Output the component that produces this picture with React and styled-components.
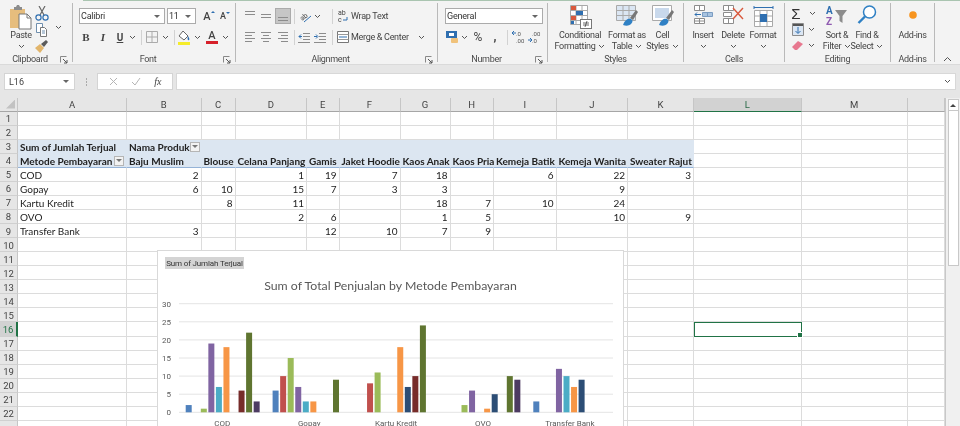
import React from 'react';
import styled, { createGlobalStyle } from 'styled-components';

const GlobalStyle = createGlobalStyle`
  html, body { margin: 0; padding: 0; background: #e6e6e6; overflow: hidden; }
  * { box-sizing: border-box; }
`;

const COLUMNS = [
  ['A', 109], ['B', 74.5], ['C', 34], ['D', 71.5], ['E', 32.5], ['F', 61], ['G', 50],
  ['H', 43.5], ['I', 62.5], ['J', 71.5], ['K', 66], ['L', 107.5], ['M', 106.5], ['', 37],
];
const PRODUCTS = ['Baju Muslim', 'Blouse', 'Celana Panjang', 'Gamis', 'Jaket Hoodie', 'Kaos Anak', 'Kaos Pria', 'Kemeja Batik', 'Kemeja Wanita', 'Sweater Rajut'];
const SALES = [
  ['COD', [2, null, 1, 19, 7, 18, null, 6, 22, 3]],
  ['Gopay', [6, 10, 15, 7, 3, 3, null, null, 9, null]],
  ['Kartu Kredit', [null, 8, 11, null, null, 18, 7, 10, 24, null]],
  ['OVO', [null, null, 2, 6, null, 1, 5, null, 10, 9]],
  ['Transfer Bank', [3, null, null, 12, 10, 7, 9, null, null, null]],
];
const SERIES = ['#4f81bd', '#c0504d', '#9bbb59', '#8064a2', '#4bacc6', '#f79646', '#2c4d75', '#772c2a', '#5f7530', '#4d3b62'];

const Window = styled.div`
  width: 960px;
  height: 426px;
  overflow: hidden;
  display: flex;
  flex-direction: column;
  background: #e6e6e6;
  font-family: Roboto, "Liberation Sans", sans-serif;
  filter: blur(0.35px);
`;

/* ribbon */
const Ribbon = styled.div`
  height: 65px;
  flex: none;
  display: flex;
  align-items: flex-start;
  padding-top: 3px;
  background: #f3f3f3;
  border-bottom: 1px solid #dadada;
  position: relative;
  &::before {
    content: "";
    position: absolute;
    top: 0;
    left: 83px;
    right: 0;
    height: 1px;
    background: #a9c4b0;
  }
`;
const Group = styled.section`
  width: ${(p) => p.$w}px;
  height: 59px;
  flex: none;
  position: relative;
  border-right: 1.5px solid #b9b9b9;
`;
const GroupBody = styled.div`
  height: 50px;
  display: flex;
  padding-left: ${(p) => p.$pad || 0}px;
  padding-top: ${(p) => p.$top ?? 2}px;
`;
const GroupLabel = styled.div`
  height: 9px;
  padding-right: ${(p) => (p.$launcher ? 12 : 0)}px;
  line-height: 12px;
  font-size: 9px;
  letter-spacing: -0.3px;
  color: #4a4a4a;
  text-align: center;
  white-space: nowrap;
`;
const Launcher = styled.svg`
  position: absolute;
  right: 3px;
  bottom: -3px;
`;
const Stack = styled.div`
  display: flex;
  flex-direction: column;
  gap: 5px;
`;
const ToolRow = styled.div`
  display: flex;
  align-items: center;
  height: 16px;
`;
const Tool = styled.div`
  width: ${(p) => p.$w || 14}px;
  height: 16px;
  margin-left: ${(p) => p.$ml || 0}px;
  flex: none;
  display: flex;
  align-items: center;
  justify-content: center;
  font-size: ${(p) => p.$size || 10}px;
  color: #444;
  background: ${(p) => (p.$active ? '#c6c6c6' : 'transparent')};
  border: ${(p) => (p.$active ? '1px solid #ababab' : 'none')};
`;
const ToolSep = styled.div`
  width: 1px;
  height: 15px;
  margin-left: ${(p) => p.$ml || 0}px;
  flex: none;
  background: #d2d2d2;
`;
const ToolText = styled.span`
  margin-left: 2px;
  font-size: 9px;
  letter-spacing: -0.3px;
  color: #444;
  white-space: nowrap;
`;
const SelectBox = styled.div`
  width: ${(p) => p.$w}px;
  height: 16px;
  margin-left: ${(p) => p.$ml || 0}px;
  flex: none;
  display: flex;
  align-items: center;
  justify-content: space-between;
  padding: 0 4px 0 1px;
  background: #fff;
  border: 1px solid #ababab;
  font-size: 9px;
  letter-spacing: -0.2px;
  color: #333;
`;
const Caret = styled.i`
  width: 0;
  height: 0;
  border-left: 3px solid transparent;
  border-right: 3px solid transparent;
  border-top: 3px solid ${(p) => p.$color || '#666'};
`;
const BigButton = styled.div`
  width: ${(p) => p.$w}px;
  flex: none;
  display: flex;
  flex-direction: column;
  align-items: center;
  font-size: 9px;
  letter-spacing: -0.3px;
  line-height: 11px;
  color: #444;
  white-space: nowrap;
`;
const BigIcon = styled.div`
  height: 25px;
  padding-top: ${(p) => p.$top || 0}px;
  display: flex;
  align-items: flex-start;
  justify-content: center;
`;
const LabelLine = styled.div`
  height: 11px;
  display: flex;
  align-items: center;
  justify-content: center;
  gap: 3px;
`;
const SmallColumn = styled.div`
  width: ${(p) => p.$w}px;
  flex: none;
  display: flex;
  flex-direction: column;
  align-items: center;
  padding-top: ${(p) => p.$top || 0}px;
  gap: ${(p) => p.$gap || 1}px;
`;
const SmallItem = styled.div`
  display: flex;
  align-items: center;
  gap: ${(p) => p.$gap || 3}px;
  height: ${(p) => p.$h || 15}px;
`;
const BoldMark = styled.b`
  font-family: "Liberation Serif", serif;
  font-size: 11px;
`;
const ItalicMark = styled.i`
  font-family: "Liberation Serif", serif;
  font-size: 11px;
  font-weight: 700;
`;
const UnderMark = styled.span`
  font-weight: 700;
  font-size: 10px;
  text-decoration: underline;
`;
const ColorMark = styled.span`
  display: block;
  width: 12px;
  height: 14px;
  line-height: 11px;
  text-align: center;
  font-size: 11px;
  font-weight: 500;
  color: #444;
  border-bottom: 3px solid #d6202a;
`;
const GrowMark = styled.span`
  font-size: ${(p) => p.$size}px;
  font-weight: 500;
  color: #444;
  position: relative;
  &::after {
    content: "";
    position: absolute;
    top: 1px;
    right: -4px;
    border-left: 2px solid transparent;
    border-right: 2px solid transparent;
    ${(p) => (p.$down ? 'border-top' : 'border-bottom')}: 2px solid #2f6fb0;
  }
`;
const SigmaMark = styled.span`
  font-family: "Liberation Sans", sans-serif;
  font-size: 15px;
  line-height: 15px;
  color: #333;
`;
const CollapseSlot = styled.div`
  flex: 1;
  height: 59px;
  display: flex;
  align-items: flex-end;
  justify-content: center;
`;

/* formula bar */
const FormulaBar = styled.div`
  height: 33px;
  flex: none;
  display: flex;
  padding: 8px 4px;
  background: #e6e6e6;
`;
const NameBox = styled.div`
  width: 71px;
  display: flex;
  align-items: center;
  justify-content: space-between;
  padding: 0 5px 0 4px;
  background: #fff;
  border: 1px solid #d4d4d4;
  font-size: 9px;
  color: #444;
`;
const GripDots = styled.div`
  width: 22px;
  display: flex;
  flex-direction: column;
  align-items: center;
  justify-content: center;
  gap: 1px;
  i {
    width: 1px;
    height: 2px;
    background: #aaa;
  }
`;
const FormulaTools = styled.div`
  width: 76px;
  display: flex;
  align-items: center;
  justify-content: space-around;
  padding: 0 4px;
  background: #fff;
  border: 1px solid #d4d4d4;
`;
const FxMark = styled.span`
  font-family: "Liberation Serif", serif;
  font-style: italic;
  font-size: 10px;
  color: #444;
`;
const FormulaInput = styled.div`
  flex: 1;
  margin-left: 3px;
  display: flex;
  align-items: center;
  justify-content: flex-end;
  padding-right: 4px;
  background: #fff;
  border: 1px solid #d8d8d8;
`;

/* sheet */
const SheetArea = styled.div`
  flex: 1;
  display: flex;
  position: relative;
  overflow: hidden;
  background: #fff;
`;
const SheetGrid = styled.div`
  width: 945px;
  flex: none;
  display: grid;
  grid-template-columns: 18px ${(p) => p.$columns};
  grid-template-rows: 13.5px repeat(23, 14.07px);
`;
const Corner = styled.div`
  background: #e6e6e6;
  border-right: 1px solid #c6c6c6;
  border-bottom: 1px solid #a6a6a6;
  position: relative;
  &::after {
    content: "";
    position: absolute;
    right: 2px;
    bottom: 2px;
    width: 9px;
    height: 9px;
    background: #c2c2c2;
    clip-path: polygon(100% 0, 100% 100%, 0 100%);
  }
`;
const ColHead = styled.div`
  display: flex;
  align-items: center;
  justify-content: center;
  font-size: 9.5px;
  color: ${(p) => (p.$selected ? '#2b6a48' : '#444')};
  background: ${(p) => (p.$selected ? '#d2d2d2' : '#e6e6e6')};
  border-right: 1px solid #c6c6c6;
  border-bottom: ${(p) => (p.$selected ? '1.5px solid #217346' : '1px solid #a6a6a6')};
`;
const RowHead = styled.div`
  display: flex;
  align-items: center;
  justify-content: center;
  padding-top: 1px;
  font-size: 9.5px;
  color: ${(p) => (p.$selected ? '#217346' : '#444')};
  background: ${(p) => (p.$selected ? '#d2d2d2' : '#e6e6e6')};
  border-right: ${(p) => (p.$selected ? '2px solid #217346' : '1px solid #c6c6c6')};
  border-bottom: 1px solid #d0d0d0;
`;
const Cell = styled.div`
  min-width: 0;
  display: flex;
  align-items: center;
  justify-content: ${(p) => (p.$num ? 'flex-end' : p.$split ? 'space-between' : 'flex-start')};
  padding: 1px 2px 0;
  white-space: nowrap;
  font-family: Lato, "Open Sans", sans-serif;
  font-size: 10px;
  font-weight: ${(p) => (p.$bold ? 700 : 400)};
  color: #222;
  background: ${(p) => (p.$pivot ? '#dce6f1' : '#fff')};
  border-right: 1px solid ${(p) => (p.$pivot ? '#dce6f1' : '#dcdcdc')};
  border-bottom: 1px solid ${(p) => (p.$headRow ? '#95b3d7' : p.$pivot ? '#dce6f1' : '#dcdcdc')};
  position: relative;
  ${(p) => p.$selected && `
    outline: 1.5px solid #217346;
    outline-offset: -1px;
    z-index: 1;
    &::after {
      content: "";
      position: absolute;
      right: -2px;
      bottom: -2px;
      width: 4px;
      height: 4px;
      background: #217346;
      border: 1px solid #fff;
    }
  `}
`;
const FilterButton = styled.span`
  width: 10px;
  height: 10px;
  flex: none;
  display: flex;
  align-items: center;
  justify-content: center;
  background: #f2f2f2;
  border: 1px solid #b5b5b5;
`;
const Scrollbar = styled.div`
  flex: 1;
  display: flex;
  flex-direction: column;
  align-items: center;
  padding-top: 1px;
  background: #f0f0f0;
  border-left: 1px solid #c8c8c8;
`;
const ScrollArrow = styled.div`
  width: 11px;
  height: 12px;
  flex: none;
  display: flex;
  align-items: center;
  justify-content: center;
  background: #fff;
  border: 1px solid #c8c8c8;
  i {
    border-left: 3px solid transparent;
    border-right: 3px solid transparent;
    border-bottom: 3px solid #444;
  }
`;
const ScrollThumb = styled.div`
  width: 11px;
  height: 155px;
  flex: none;
  background: #fff;
  border: 1px solid #c8c8c8;
  border-top: none;
`;

/* chart, floats over the cells */
const ChartBox = styled.div`
  position: absolute;
  left: 157px;
  top: 152px;
  width: 467px;
  height: 190px;
  z-index: 2;
  background: #fff;
  border: 1px solid #d9d9d9;
`;
const FieldButton = styled.div`
  width: 79px;
  height: 12px;
  margin: 6px 0 0 7px;
  display: flex;
  align-items: center;
  justify-content: center;
  background: #d4d4d4;
  font-size: 8px;
  letter-spacing: -0.15px;
  color: #333;
  white-space: nowrap;
`;
const ChartTitle = styled.div`
  height: 20px;
  margin-top: 7px;
  line-height: 20px;
  text-align: center;
  font-family: Lato, sans-serif;
  font-size: 12.3px;
  color: #595959;
  white-space: nowrap;
`;
const Plot = styled.svg`
  display: block;
  text {
    font-family: Roboto, sans-serif;
    font-size: 8px;
    fill: #595959;
  }
`;

const Chev = ({ color = '#555' }) => (
  <svg width="7" height="5" viewBox="0 0 7 5"><path d="M1 1l2.5 2.5L6 1" fill="none" stroke={color} strokeWidth="1" /></svg>
);
const Corner9 = () => (
  <Launcher width="9" height="9" viewBox="0 0 9 9">
    <path d="M.5.5h6M.5.5v6" stroke="#888" fill="none" />
    <path d="M3 3l4 4M7 4v3H4" stroke="#555" fill="none" />
  </Launcher>
);
const Lines = ({ rows }) => (
  <svg width="14" height="14" viewBox="0 0 14 14">
    {rows.map(([y, a, b]) => <path key={y} d={`M${a} ${y}.5H${b}`} stroke="#8c8c8c" />)}
  </svg>
);
const PasteIcon = () => (
  <svg width="22" height="25" viewBox="0 0 22 25">
    <rect x="0" y="4" width="15" height="19" fill="#e6bd7d" />
    <path d="M4 4V2h2l1-2h2l1 2h2v3H4z" fill="#8c8c8c" />
    <path d="M9 9h8l4 4v11H9z" fill="#fff" stroke="#777" />
    <path d="M17 9v4h4" fill="none" stroke="#777" />
  </svg>
);
const CutIcon = () => (
  <svg width="14" height="15" viewBox="0 0 14 15">
    <path d="M4 0l5 9M10 0L5 9" stroke="#666" strokeWidth="1.2" />
    <circle cx="3.5" cy="11.5" r="2.6" fill="none" stroke="#2f6fb0" strokeWidth="1.2" />
    <circle cx="10.5" cy="11.5" r="2.6" fill="none" stroke="#2f6fb0" strokeWidth="1.2" />
  </svg>
);
const CopyIcon = () => (
  <svg width="14" height="14" viewBox="0 0 14 14">
    <path d="M1.5.5h6v9h-6z" fill="#fff" stroke="#6f8fae" />
    <path d="M5.5 4.5h4l2 2v7h-6z" fill="#fff" stroke="#777" />
    <path d="M7 8h3M7 10h3" stroke="#6f8fae" />
  </svg>
);
const BrushIcon = () => (
  <svg width="14" height="14" viewBox="0 0 14 14">
    <path d="M0 9l5-4 4 4-4 5z" fill="#e2b56b" />
    <path d="M6 5l5-4 2 2-4 5z" fill="#5b5b5b" />
  </svg>
);
const BordersIcon = () => (
  <svg width="12" height="12" viewBox="0 0 12 12">
    <path d="M.5.5h11v11H.5zM6 .5v11M.5 6h11" fill="none" stroke="#ababab" />
  </svg>
);
const FillIcon = () => (
  <svg width="14" height="15" viewBox="0 0 14 15">
    <path d="M6 1l5 5-4 4-5-4z" fill="#fff" stroke="#666" />
    <path d="M11 6c1 2 2 3 1 4s-2-1-1-4z" fill="#2f6fb0" />
    <rect x="1" y="12" width="12" height="3" fill="#f5ec2a" />
  </svg>
);
const OrientationIcon = () => (
  <svg width="13" height="13" viewBox="0 0 13 13">
    <text x="1" y="9" fontSize="7" fill="#444" transform="rotate(-40 5 7)">ab</text>
    <path d="M5 12l7-6" stroke="#2f6fb0" />
  </svg>
);
const WrapIcon = () => (
  <svg width="12" height="14" viewBox="0 0 12 14">
    <text x="1" y="6" fontSize="7" fill="#444">ab</text>
    <text x="1" y="13" fontSize="7" fill="#444">c</text>
    <path d="M6 11h4V8" fill="none" stroke="#2f6fb0" />
  </svg>
);
const MergeIcon = () => (
  <svg width="12" height="12" viewBox="0 0 12 12">
    <path d="M.5.5h11v11H.5z" fill="#fff" stroke="#777" />
    <path d="M.5 3.5h11M.5 8.5h11" stroke="#999" />
    <path d="M2 6h8" stroke="#2f6fb0" />
  </svg>
);
const IndentIcon = ({ flip }) => (
  <svg width="12" height="11" viewBox="0 0 12 11">
    <path d="M5 1.5h7M5 4.5h7M5 7.5h7M0 10.5h12" stroke="#8c8c8c" />
    <path d={flip ? 'M0 4.5h3M2 2.5l2 2-2 2' : 'M1 4.5h3M3 2.5l-2 2 2 2'} fill="none" stroke="#2f6fb0" />
  </svg>
);
const AccountingIcon = () => (
  <svg width="13" height="13" viewBox="0 0 13 13">
    <rect x="0" y="0" width="11" height="7" fill="#2f6fb0" />
    <rect x="3" y="2" width="5" height="3" fill="#fff" />
    <rect x="5" y="7" width="7" height="5" rx="1" fill="#f0c27b" />
  </svg>
);
const DecimalIcon = ({ top, bottom, left }) => (
  <svg width="13" height="14" viewBox="0 0 13 14">
    <text x="4" y="6" fontSize="6" fill="#555">{top}</text>
    <text x="4" y="13" fontSize="6" fill="#555">{bottom}</text>
    <path d={left ? 'M0 3h4M2 1L0 3l2 2' : 'M0 10h4M2 8l2 2-2 2'} fill="none" stroke="#2f6fb0" />
  </svg>
);
const TableBase = () => (
  <path d="M1.5 .5h17v19h-17zM7 .5v19M13 .5v19M1.5 5.5h17M1.5 10.5h17M1.5 15.5h17" fill="#fff" stroke="#a9a9a9" />
);
const ConditionalIcon = () => (
  <svg width="23" height="24" viewBox="0 0 23 24">
    <TableBase />
    <rect x="2" y="1" width="5" height="4" fill="#d9593d" />
    <rect x="7" y="6" width="7" height="4" fill="#2f6fb0" />
    <rect x="2" y="11" width="5" height="4" fill="#d9593d" />
    <rect x="2" y="16" width="3" height="3" fill="#2f6fb0" />
    <rect x="11.5" y="14.5" width="11" height="9" fill="#fff" stroke="#777" />
    <path d="M14 18h6M14 20h6M18 16l-2 6" stroke="#444" strokeWidth=".8" />
  </svg>
);
const BrushStroke = () => (
  <>
    <path d="M15 13l6-8 2 2-5 8z" fill="#777" />
    <path d="M8 20c2-6 6-7 8-6s2 3 0 5-5 2-8 1z" fill="#2f80c4" />
  </>
);
const TableStyleIcon = () => (
  <svg width="24" height="23" viewBox="0 0 24 23">
    <path d="M1.5 .5h19v15h-19zM8 .5v15M14 .5v15M1.5 5.5h19M1.5 10.5h19" fill="#dbe6f3" stroke="#a9a9a9" />
    <BrushStroke />
  </svg>
);
const CellStyleIcon = () => (
  <svg width="24" height="23" viewBox="0 0 24 23">
    <path d="M1.5 .5h19v15h-19z" fill="#fff" stroke="#a9a9a9" />
    <rect x="4" y="3" width="14" height="10" fill="#c9d9ec" />
    <BrushStroke />
  </svg>
);
const InsertIcon = () => (
  <svg width="20" height="20" viewBox="0 0 20 20">
    <path d="M1.5 .5h10v5h-10zM6.5.5v5M1.5 13.5h10v5h-10zM6.5 13.5v5M1.5 16h10" fill="#fff" stroke="#8c8c8c" />
    <path d="M9.5 7.5h10v4h-10zM14.5 7.5v4" fill="#a9c4e0" stroke="#7a9cc2" />
    <path d="M2 9.5h6M4 7.5l-2 2 2 2" fill="none" stroke="#2f6fb0" />
  </svg>
);
const DeleteIcon = () => (
  <svg width="21" height="20" viewBox="0 0 21 20">
    <path d="M.5.5h10v5H.5zM5.5.5v5M.5 13.5h10v5H.5zM5.5 13.5v5M.5 7.5h8v4h-8z" fill="#fff" stroke="#8c8c8c" />
    <path d="M10 3l10 11M20 3L10 14" stroke="#d9593d" strokeWidth="1.4" />
  </svg>
);
const FormatIcon = () => (
  <svg width="21" height="23" viewBox="0 0 21 23">
    <path d="M1 2.5h19M1 1v3M20 1v3" stroke="#2f6fb0" fill="none" />
    <path d="M1.5 5.5h18v16h-18zM7 5.5v16M14 5.5v16M1.5 11h18M1.5 16.5h18" fill="#fff" stroke="#a9a9a9" />
    <rect x="7" y="9" width="7" height="8" fill="#2f6fb0" />
  </svg>
);
const FillDownIcon = () => (
  <svg width="12" height="13" viewBox="0 0 12 13">
    <path d="M.5.5h11v12H.5z" fill="#dbe6f3" stroke="#8c8c8c" />
    <rect x="1" y="1" width="10" height="2" fill="#555" />
    <path d="M6 4v6M3.5 8L6 10.5 8.5 8" fill="none" stroke="#2f6fb0" />
  </svg>
);
const EraserIcon = () => (
  <svg width="12" height="11" viewBox="0 0 12 11">
    <path d="M0 7l6-6 5 3-6 6H3z" fill="#e7788f" />
  </svg>
);
const SortIcon = () => (
  <svg width="22" height="22" viewBox="0 0 22 22">
    <text x="0" y="9" fontSize="10" fontWeight="700" fill="#2f6fb0">A</text>
    <text x="0" y="20" fontSize="10" fontWeight="700" fill="#8f5ab0">Z</text>
    <path d="M9 5h12l-4.5 6v7l-3-2v-5z" fill="#8c8c8c" />
  </svg>
);
const FindIcon = () => (
  <svg width="20" height="20" viewBox="0 0 20 20">
    <circle cx="12.5" cy="7" r="6" fill="#fff" stroke="#2f80c4" strokeWidth="1.5" />
    <path d="M8 11.5L1.5 18" stroke="#2f80c4" strokeWidth="2.4" />
  </svg>
);
const AddinIcon = () => (
  <svg width="10" height="10" viewBox="0 0 10 10"><circle cx="5" cy="5" r="3.8" fill="#f7941e" /></svg>
);
const CrossIcon = () => (
  <svg width="9" height="9" viewBox="0 0 9 9"><path d="M1 1l7 7M8 1L1 8" stroke="#b5b5b5" /></svg>
);
const CheckIcon = () => (
  <svg width="10" height="9" viewBox="0 0 10 9"><path d="M1 5l3 3 5-7" fill="none" stroke="#b5b5b5" /></svg>
);

const BigTool = ({ w, icon, lines }) => (
  <BigButton $w={w}>
    <BigIcon>{icon}</BigIcon>
    <LabelLine>{lines[0]}</LabelLine>
    <LabelLine>{lines[1]}<Chev /></LabelLine>
  </BigButton>
);

function TopRibbon() {
  return (
    <Ribbon>
      <Group $w={73}>
        <GroupBody $pad={9}>
          <BigButton $w={24}>
            <BigIcon><PasteIcon /></BigIcon>
            <LabelLine>Paste</LabelLine>
            <LabelLine><Chev /></LabelLine>
          </BigButton>
          <SmallColumn $w={18} $top={1}>
            <SmallItem $h={15}><CutIcon /></SmallItem>
            <SmallItem $h={15}><CopyIcon /></SmallItem>
            <SmallItem $h={15}><BrushIcon /></SmallItem>
          </SmallColumn>
          <SmallColumn $w={14} $top={20}><Chev /></SmallColumn>
        </GroupBody>
        <GroupLabel $launcher>Clipboard</GroupLabel>
        <Corner9 />
      </Group>
      <Group $w={163}>
        <GroupBody $pad={6} $top={5}>
          <Stack>
            <ToolRow>
              <SelectBox $w={86}>Calibri<Caret /></SelectBox>
              <SelectBox $w={29} $ml={2}>11<Caret /></SelectBox>
              <Tool $ml={4}><GrowMark $size={11}>A</GrowMark></Tool>
              <Tool $ml={2}><GrowMark $size={9} $down>A</GrowMark></Tool>
            </ToolRow>
            <ToolRow>
              <Tool><BoldMark>B</BoldMark></Tool>
              <Tool $ml={3}><ItalicMark>I</ItalicMark></Tool>
              <Tool $ml={3}><UnderMark>U</UnderMark></Tool>
              <Tool $w={8} $ml={1}><Chev /></Tool>
              <ToolSep $ml={5} />
              <Tool $w={12} $ml={4}><BordersIcon /></Tool>
              <Tool $w={8} $ml={3}><Chev /></Tool>
              <ToolSep $ml={5} />
              <Tool $ml={2}><FillIcon /></Tool>
              <Tool $w={8} $ml={2}><Chev /></Tool>
              <Tool $ml={4}><ColorMark>A</ColorMark></Tool>
              <Tool $w={8} $ml={2}><Chev /></Tool>
            </ToolRow>
          </Stack>
        </GroupBody>
        <GroupLabel $launcher>Font</GroupLabel>
        <Corner9 />
      </Group>
      <Group $w={202}>
        <GroupBody $pad={6} $top={5}>
          <Stack>
            <ToolRow>
              <Tool $w={16}><Lines rows={[[2, 2, 12], [5, 2, 12]]} /></Tool>
              <Tool $w={16}><Lines rows={[[5, 2, 12], [8, 2, 12]]} /></Tool>
              <Tool $w={16} $ml={1} $active><Lines rows={[[8, 2, 12], [11, 2, 12]]} /></Tool>
              <ToolSep $ml={3} />
              <Tool $w={16} $ml={2}><OrientationIcon /></Tool>
              <Tool $w={8}><Chev /></Tool>
              <ToolSep $ml={11} />
              <Tool $w={12} $ml={4}><WrapIcon /></Tool>
              <ToolText>Wrap Text</ToolText>
            </ToolRow>
            <ToolRow>
              <Tool $w={16}><Lines rows={[[2, 2, 12], [5, 2, 9], [8, 2, 12], [11, 2, 9]]} /></Tool>
              <Tool $w={16}><Lines rows={[[2, 2, 12], [5, 4, 10], [8, 2, 12], [11, 4, 10]]} /></Tool>
              <Tool $w={16} $ml={1}><Lines rows={[[2, 2, 12], [5, 5, 12], [8, 2, 12], [11, 5, 12]]} /></Tool>
              <ToolSep $ml={3} />
              <Tool $w={12} $ml={3}><IndentIcon /></Tool>
              <Tool $w={12} $ml={4}><IndentIcon flip /></Tool>
              <ToolSep $ml={6} />
              <Tool $w={12} $ml={4}><MergeIcon /></Tool>
              <ToolText>Merge &amp; Center</ToolText>
              <Tool $w={8} $ml={9}><Chev /></Tool>
            </ToolRow>
          </Stack>
        </GroupBody>
        <GroupLabel $launcher>Alignment</GroupLabel>
        <Corner9 />
      </Group>
      <Group $w={110}>
        <GroupBody $pad={7} $top={5}>
          <Stack>
            <ToolRow><SelectBox $w={98}>General<Caret /></SelectBox></ToolRow>
            <ToolRow>
              <Tool><AccountingIcon /></Tool>
              <Tool $w={8} $ml={1}><Chev /></Tool>
              <Tool $ml={3} $size={12}>%</Tool>
              <Tool $ml={3} $size={12}><b>,</b></Tool>
              <ToolSep $ml={5} />
              <Tool $ml={3}><DecimalIcon top=".0" bottom=".00" left /></Tool>
              <Tool $ml={2}><DecimalIcon top=".00" bottom=".0" /></Tool>
            </ToolRow>
          </Stack>
        </GroupBody>
        <GroupLabel $launcher>Number</GroupLabel>
        <Corner9 />
      </Group>
      <Group $w={136}>
        <GroupBody $pad={3}>
          <BigTool w={58} icon={<ConditionalIcon />} lines={['Conditional', 'Formatting']} />
          <BigTool w={36} icon={<TableStyleIcon />} lines={['Format as', 'Table']} />
          <BigTool w={35} icon={<CellStyleIcon />} lines={['Cell', 'Styles']} />
        </GroupBody>
        <GroupLabel>Styles</GroupLabel>
      </Group>
      <Group $w={101}>
        <GroupBody $pad={4}>
          <BigTool w={30} icon={<InsertIcon />} lines={['Insert', '']} />
          <BigTool w={30} icon={<DeleteIcon />} lines={['Delete', '']} />
          <BigTool w={30} icon={<FormatIcon />} lines={['Format', '']} />
        </GroupBody>
        <GroupLabel>Cells</GroupLabel>
      </Group>
      <Group $w={106}>
        <GroupBody $pad={2}>
          <SmallColumn $w={33} $top={1}>
            <SmallItem $gap={8}><SigmaMark>Σ</SigmaMark><Chev /></SmallItem>
            <SmallItem $gap={4}><FillDownIcon /><Chev /></SmallItem>
            <SmallItem $gap={4}><EraserIcon /><Chev /></SmallItem>
          </SmallColumn>
          <BigTool w={34} icon={<SortIcon />} lines={['Sort &', 'Filter']} />
          <BigTool w={26} icon={<FindIcon />} lines={['Find &', 'Select']} />
        </GroupBody>
        <GroupLabel>Editing</GroupLabel>
      </Group>
      <Group $w={44}>
        <GroupBody>
          <BigButton $w={43}>
            <BigIcon $top={5}><AddinIcon /></BigIcon>
            <LabelLine>Add-ins</LabelLine>
          </BigButton>
        </GroupBody>
        <GroupLabel>Add-ins</GroupLabel>
      </Group>
      <CollapseSlot>
        <svg width="9" height="6" viewBox="0 0 9 6"><path d="M1 5l3.5-3.5L8 5" fill="none" stroke="#555" /></svg>
      </CollapseSlot>
    </Ribbon>
  );
}

function cellFor(row, colIndex) {
  if (colIndex > 10) return {};
  if (row === 3) {
    if (colIndex === 0) return { $pivot: true, $bold: true, text: 'Sum of Jumlah Terjual' };
    if (colIndex === 1) return { $pivot: true, $bold: true, $split: true, text: 'Nama Produk', filter: true };
    return { $pivot: true };
  }
  if (row === 4) {
    if (colIndex === 0) return { $pivot: true, $headRow: true, $bold: true, $split: true, text: 'Metode Pembayaran', filter: true };
    return { $pivot: true, $headRow: true, $bold: true, text: PRODUCTS[colIndex - 1] };
  }
  const sale = SALES[row - 5];
  if (!sale) return {};
  if (colIndex === 0) return { text: sale[0] };
  return { $num: true, text: sale[1][colIndex - 1] };
}

function Sheet() {
  const rows = Array.from({ length: 23 }, (_, i) => i + 1);
  return (
    <SheetGrid $columns={COLUMNS.map(([, w]) => `${w}px`).join(' ')}>
      <Corner />
      {COLUMNS.map(([id], i) => <ColHead key={i} $selected={id === 'L'}>{id}</ColHead>)}
      {rows.map((row) => (
        <React.Fragment key={row}>
          <RowHead $selected={row === 16}>{row === 23 ? '' : row}</RowHead>
          {COLUMNS.map(([id], i) => {
            const { text, filter, ...style } = cellFor(row, i);
            return (
              <Cell key={i} $selected={row === 16 && id === 'L'} {...style}>
                {text}
                {filter && <FilterButton><Caret $color="#777" /></FilterButton>}
              </Cell>
            );
          })}
        </React.Fragment>
      ))}
    </SheetGrid>
  );
}

// viewBox keeps the page coordinates of the plot
const BASE_Y = 412.3;
const UNIT = 3.62;

function SalesChart() {
  return (
    <ChartBox>
      <FieldButton>Sum of Jumlah Terjual</FieldButton>
      <ChartTitle>Sum of Total Penjualan by Metode Pembayaran</ChartTitle>
      <Plot width="465" height="135" viewBox="158 296 465 135">
        {[0, 5, 10, 15, 20, 25, 30].map((v) => (
          <g key={v}>
            <path d={`M179 ${BASE_Y - v * UNIT}H613`} stroke="#e4e4e4" />
            <text x="171" y={BASE_Y - v * UNIT + 3} textAnchor="end">{v}</text>
          </g>
        ))}
        {SALES.map(([name, values], c) => (
          <g key={name}>
            {values.map((v, s) => v && (
              <rect key={s} x={185.7 + 86.9 * c + 7.55 * s} y={BASE_Y - v * UNIT} width="6" height={v * UNIT} fill={SERIES[s]} />
            ))}
            <text x={222.3 + 86.9 * c} y="425.5" textAnchor="middle">{name}</text>
          </g>
        ))}
      </Plot>
    </ChartBox>
  );
}

export default function App() {
  return (
    <>
      <GlobalStyle />
      <Window>
        <TopRibbon />
        <FormulaBar>
          <NameBox>L16<Caret /></NameBox>
          <GripDots><i /><i /><i /></GripDots>
          <FormulaTools><CrossIcon /><CheckIcon /><FxMark>fx</FxMark></FormulaTools>
          <FormulaInput><Chev /></FormulaInput>
        </FormulaBar>
        <SheetArea>
          <Sheet />
          <SalesChart />
          <Scrollbar>
            <ScrollArrow><i /></ScrollArrow>
            <ScrollThumb />
          </Scrollbar>
        </SheetArea>
      </Window>
    </>
  );
}
